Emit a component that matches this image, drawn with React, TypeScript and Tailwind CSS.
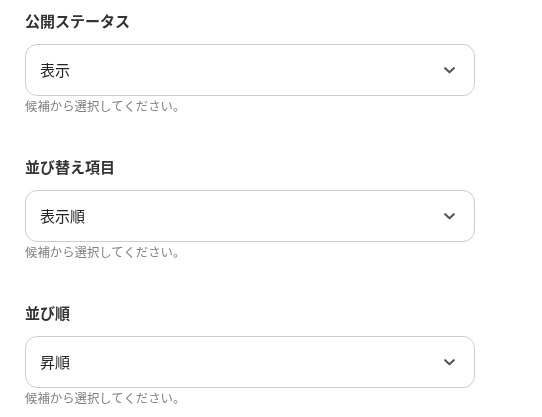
const fields = [
  { label: "公開ステータス", value: "表示" },
  { label: "並び替え項目", value: "表示順" },
  { label: "並び順", value: "昇順" },
];

function Chevron() {
  return (
    <svg width="11" height="7" viewBox="0 0 11 7" fill="none" className="shrink-0">
      <path d="M1.2 1.2 L5.5 5.3 L9.8 1.2" stroke="#555" strokeWidth="2.1" strokeLinecap="round" strokeLinejoin="round" />
    </svg>
  );
}

export default function App() {
  return (
    <div
      lang="ja"
      className="min-h-screen bg-white pl-[25px] pt-[10px] antialiased"
      style={{ fontFamily: '"Noto Sans CJK JP", "Noto Sans", sans-serif' }}
    >
      <div className="w-[450px] will-change-transform">
        {fields.map((f) => (
          <div key={f.label} className="mb-[42px]">
            <div className="text-[15px] font-bold leading-[22px] text-[#333]">{f.label}</div>
            <div className="mt-[12px] flex h-[52px] items-center justify-between rounded-[12px] border border-[#cccccc] pl-[14px] pr-[19px]">
              <span className="text-[15px] leading-[22px] text-[#222]">{f.value}</span>
              <Chevron />
            </div>
            <div className="mt-[2px] text-[12.4px] leading-[16px] text-[#808080]">候補から選択してください。</div>
          </div>
        ))}
      </div>
    </div>
  );
}
